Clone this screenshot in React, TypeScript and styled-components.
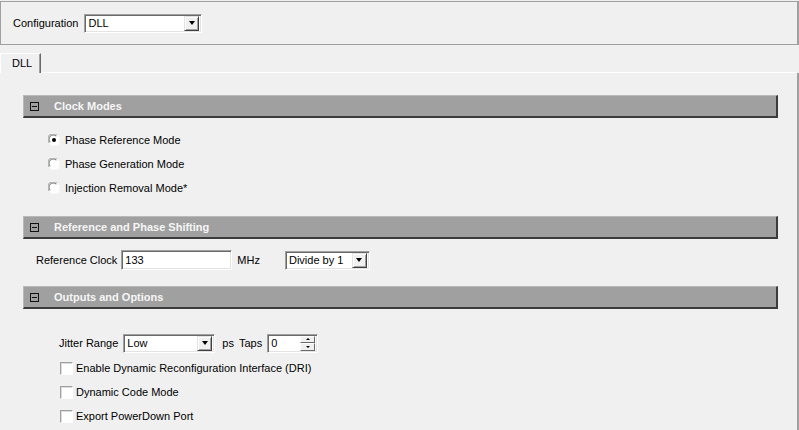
import styled, { createGlobalStyle } from 'styled-components'

const GlobalStyle = createGlobalStyle`
  body {
    margin: 0;
    background: #f0f0f0;
    font-family: "Liberation Sans", Arial, sans-serif;
    font-size: 11px;
    color: #000;
  }
`

const Window = styled.div`
  width: 799px;
  height: 430px;
  overflow: hidden;
  display: flex;
  flex-direction: column;
  box-sizing: border-box;
`

const ConfigBar = styled.div`
  margin-top: 1px;
  height: 44px;
  box-sizing: border-box;
  border: 1px solid #a0a0a0;
  border-right-width: 2px;
  display: flex;
  align-items: center;
  padding-left: 12px;
  gap: 6px;
`

const TabRow = styled.div`
  margin-top: 8px;
  display: flex;
  height: 20px;
`

const Tab = styled.div`
  width: 41px;
  box-sizing: border-box;
  border-left: 1px solid #fff;
  border-top: 1px solid #fff;
  border-right: 1px solid #696969;
  box-shadow: inset -1px 0 #a0a0a0;
  padding-left: 11px;
  line-height: 18px;
`

const TabFiller = styled.div`
  flex: 1;
  border-bottom: 1px solid #fff;
  margin-right: 2px;
`

const Pane = styled.div`
  flex: 1;
  border-right: 2px solid #a0a0a0;
  padding: 22px 19px 0 23px;
`

const Section = styled.section`
  display: flex;
  flex-direction: column;
`

const SectionHeader = styled.div<{ top: number }>`
  margin-top: ${({ top }) => top}px;
  height: 23px;
  box-sizing: border-box;
  background: #a0a0a0;
  border-top: 1px solid #b9b9b9;
  border-left: 1px solid #b9b9b9;
  border-bottom: 2px solid #3c3c3c;
  border-right: 2px solid #3c3c3c;
  display: flex;
  align-items: center;
  padding-left: 6px;
  gap: 15px;
  color: #f6f6f6;
  font-weight: bold;
`

const Collapse = styled.span`
  width: 9px;
  height: 9px;
  box-sizing: border-box;
  border: 1px solid #111;
  position: relative;

  &::after {
    content: '';
    position: absolute;
    left: 1px;
    right: 1px;
    top: 3px;
    height: 1px;
    background: #111;
  }
`

const OptionList = styled.div<{ top: number; indent: number }>`
  margin-top: ${({ top }) => top}px;
  padding-left: ${({ indent }) => indent}px;
  display: flex;
  flex-direction: column;
`

const OptionRow = styled.label<{ gap: number }>`
  height: 24px;
  display: flex;
  align-items: center;
  gap: ${({ gap }) => gap}px;
`

const Check = styled.span`
  width: 13px;
  height: 13px;
  box-sizing: border-box;
  background: #fff;
  border: 1px solid;
  border-color: #a0a0a0 #fff #fff #a0a0a0;
  box-shadow: inset 1px 1px #dcdcdc;
`

const FieldRow = styled.div<{ top: number; indent: number }>`
  margin-top: ${({ top }) => top}px;
  padding-left: ${({ indent }) => indent}px;
  display: flex;
  align-items: center;
  height: 20px;
`

const Gap = styled.span<{ w: number }>`
  width: ${({ w }) => w}px;
  flex-shrink: 0;
`

const Sunken = styled.div<{ w: number; h?: number }>`
  width: ${({ w }) => w}px;
  height: ${({ h }) => h ?? 19}px;
  box-sizing: border-box;
  background: #fff;
  border: 1px solid;
  border-color: #a0a0a0 #fff #fff #a0a0a0;
  box-shadow: inset 1px 1px #696969, inset -1px -1px #e3e3e3;
  display: flex;
  align-items: center;
  padding: 0 2px 0 3px;
`

const Value = styled.span`
  flex: 1;
  white-space: nowrap;
`

const ArrowButton = styled.span`
  width: 15px;
  height: 15px;
  box-sizing: border-box;
  background: #f0f0f0;
  border: 1px solid;
  border-color: #e3e3e3 #404040 #404040 #e3e3e3;
  box-shadow: inset 1px 1px #fff, inset -1px -1px #a0a0a0;
  display: flex;
  align-items: center;
  justify-content: center;
`

const Tri = styled.span<{ up?: boolean; small?: boolean }>`
  width: 0;
  height: 0;
  border-left: ${({ small }) => (small ? 2 : 3.5)}px solid transparent;
  border-right: ${({ small }) => (small ? 2 : 3.5)}px solid transparent;
  ${({ up, small }) =>
    up
      ? `border-bottom: ${small ? 2 : 4}px solid #000;`
      : `border-top: ${small ? 2 : 4}px solid #000;`}
`

const SpinButtons = styled.div`
  display: flex;
  flex-direction: column;
  width: 15px;
  height: 15px;
`

const SpinHalf = styled.span`
  flex: 1;
  box-sizing: border-box;
  background: #f0f0f0;
  border: 1px solid;
  border-color: #fff #696969 #696969 #fff;
  display: flex;
  align-items: center;
  justify-content: center;
`

function Radio({ checked }: { checked?: boolean }) {
  return (
    <svg width="12" height="12" viewBox="0 0 12 12">
      <circle cx="6" cy="6" r="5.5" fill="#fff" />
      <path d="M1.2 9 A5.2 5.2 0 0 1 9 1.2" stroke="#a0a0a0" fill="none" />
      <path d="M2.2 8.2 A4.2 4.2 0 0 1 8.2 2.2" stroke="#696969" fill="none" />
      <path d="M10.8 3 A5.2 5.2 0 0 1 3 10.8" stroke="#fff" fill="none" />
      {checked && <circle cx="6" cy="6" r="2" fill="#000" />}
    </svg>
  )
}

function Select({ w, value }: { w: number; value: string }) {
  return (
    <Sunken w={w}>
      <Value>{value}</Value>
      <ArrowButton>
        <Tri />
      </ArrowButton>
    </Sunken>
  )
}

const clockModes = ['Phase Reference Mode', 'Phase Generation Mode', 'Injection Removal Mode*']
const options = [
  'Enable Dynamic Reconfiguration Interface (DRI)',
  'Dynamic Code Mode',
  'Export PowerDown Port',
]

export default function App() {
  return (
    <Window>
      <GlobalStyle />
      <ConfigBar>
        <span>Configuration</span>
        <Select w={118} value="DLL" />
      </ConfigBar>
      <TabRow>
        <Tab>DLL</Tab>
        <TabFiller />
      </TabRow>
      <Pane>
        <Section>
          <SectionHeader top={0}>
            <Collapse />
            Clock Modes
          </SectionHeader>
          <OptionList top={10} indent={25}>
            {clockModes.map((m, i) => (
              <OptionRow key={m} gap={5}>
                <Radio checked={i === 0} />
                {m}
              </OptionRow>
            ))}
          </OptionList>
        </Section>

        <Section>
          <SectionHeader top={16}>
            <Collapse />
            Reference and Phase Shifting
          </SectionHeader>
          <FieldRow top={11} indent={13}>
            <span>Reference Clock</span>
            <Gap w={4} />
            <Sunken w={111} h={20}>
              <Value>133</Value>
            </Sunken>
            <Gap w={5} />
            <span>MHz</span>
            <Gap w={25} />
            <Select w={85} value="Divide by 1" />
          </FieldRow>
        </Section>

        <Section>
          <SectionHeader top={16}>
            <Collapse />
            Outputs and Options
          </SectionHeader>
          <FieldRow top={24} indent={36}>
            <span>Jitter Range</span>
            <Gap w={5} />
            <Select w={92} value="Low" />
            <Gap w={7} />
            <span>ps</span>
            <Gap w={5} />
            <span>Taps</span>
            <Gap w={5} />
            <Sunken w={51}>
              <Value>0</Value>
              <SpinButtons>
                <SpinHalf>
                  <Tri up small />
                </SpinHalf>
                <SpinHalf>
                  <Tri small />
                </SpinHalf>
              </SpinButtons>
            </Sunken>
          </FieldRow>
          <OptionList top={3} indent={37}>
            {options.map((o) => (
              <OptionRow key={o} gap={3}>
                <Check />
                {o}
              </OptionRow>
            ))}
          </OptionList>
        </Section>
      </Pane>
    </Window>
  )
}
